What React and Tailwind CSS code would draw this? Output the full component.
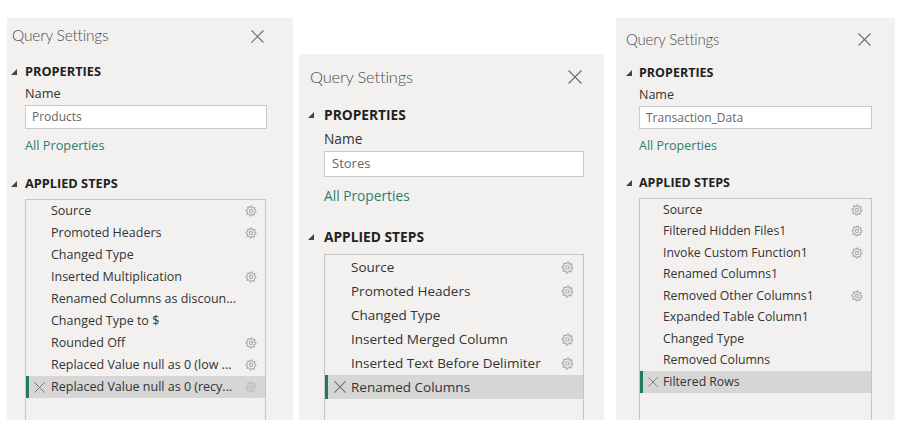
import React from 'react';

const FONT = "font-['Open_Sans','Noto_Sans',sans-serif]";

// small outlined cog used next to steps that have settings
const gearPoints = (() => {
    const pts = [];
    const teeth = 8;
    for (let i = 0; i < teeth * 4; i++) {
        const a = (i / (teeth * 4)) * Math.PI * 2 - Math.PI / 2;
        const r = i % 4 === 0 || i % 4 === 1 ? 5 : 3.7;
        pts.push(`${(6 + r * Math.cos(a)).toFixed(2)},${(6 + r * Math.sin(a)).toFixed(2)}`);
    }
    return pts.join(' ');
})();

const Gear = ({ className }) => (
    <svg viewBox="0 0 12 12" className={className} fill="none" stroke="#aaaaaa" strokeWidth="1.1">
        <polygon points={gearPoints} strokeLinejoin="round" />
        <circle cx="6" cy="6" r="1.6" />
    </svg>
);

const Close = ({ className }) => (
    <svg viewBox="0 0 13 13" className={className} stroke="#6f6f6f" strokeWidth="1.1" fill="none">
        <path d="M0.5 0.5 L12.5 12.5 M12.5 0.5 L0.5 12.5" />
    </svg>
);

const Tri = ({ className }) => (
    <svg viewBox="0 0 6 6" className={className}>
        <polygon points="6,0 6,6 0,6" fill="#444" />
    </svg>
);

const panels = [
    {
        name: 'Products',
        steps: [
            ['Source', true],
            ['Promoted Headers', true],
            ['Changed Type', false],
            ['Inserted Multiplication', true],
            ['Renamed Columns as discoun...', false],
            ['Changed Type to $', false],
            ['Rounded Off', true],
            ['Replaced Value null as 0 (low ...', true],
            ['Replaced Value null as 0 (recy...', true],
        ],
        c: {
            panel: 'w-[286px] h-[402px]',
            header: 'h-[36px] pl-[5px] pr-[29px]',
            title: 'text-[15.5px]',
            close: 'w-[13px] h-[13px]',
            sec: 'h-[20px] pl-[4px]',
            tri: 'w-[6px] h-[6px] mr-[8px]',
            secText: 'text-[12.75px]',
            propMt: 'mt-[8px]',
            appliedMt: 'mt-[18px]',
            inner: 'pl-[18px] pr-[26px]',
            box: 'ml-[18px] mr-[27px] mt-[5px]',
            label: 'h-[20px] mt-[2px] text-[12.75px]',
            input: 'h-[24px] mt-[1px] text-[12px] pl-[6px]',
            link: 'h-[20px] mt-[7px] text-[12.75px]',
            row: 'h-[22px] text-[12.5px] pl-[25px] pr-[8px]',
            rowSel: 'h-[22px] text-[12.5px] pl-[5px] pr-[8px]',
            x: 'w-[11px] h-[11px] mr-[6px]',
            gear: 'w-[12px] h-[12px]',
        },
    },
    {
        name: 'Stores',
        steps: [
            ['Source', true],
            ['Promoted Headers', true],
            ['Changed Type', false],
            ['Inserted Merged Column', true],
            ['Inserted Text Before Delimiter', true],
            ['Renamed Columns', false],
        ],
        c: {
            panel: 'w-[305px] h-[366px] ml-[6px]',
            header: 'h-[46px] pl-[11px] pr-[22px]',
            title: 'text-[16.5px]',
            close: 'w-[14px] h-[14px]',
            sec: 'h-[22px] pl-[9px]',
            tri: 'w-[6px] h-[6px] mr-[10px]',
            secText: 'text-[13.75px]',
            propMt: 'mt-[4px]',
            appliedMt: 'mt-[19px]',
            inner: 'pl-[25px] pr-[20px]',
            box: 'ml-[25px] mr-[20px] mt-[6px]',
            label: 'h-[22px] mt-[2px] text-[13.75px]',
            input: 'h-[26px] mt-[1px] text-[13px] pl-[7px]',
            link: 'h-[22px] mt-[8px] text-[13.75px]',
            row: 'h-[24px] text-[13.5px] pl-[26px] pr-[9px]',
            rowSel: 'h-[24px] text-[13.5px] pl-[6px] pr-[9px]',
            x: 'w-[12px] h-[12px] mr-[5px]',
            gear: 'w-[13px] h-[13px]',
        },
    },
    {
        name: 'Transaction_Data',
        steps: [
            ['Source', true],
            ['Filtered Hidden Files1', true],
            ['Invoke Custom Function1', true],
            ['Renamed Columns1', false],
            ['Removed Other Columns1', true],
            ['Expanded Table Column1', false],
            ['Changed Type', false],
            ['Removed Columns', false],
            ['Filtered Rows', false],
        ],
        c: {
            panel: 'w-[279px] h-[402px] ml-[12px]',
            header: 'h-[42px] pl-[10px] pr-[24px]',
            title: 'text-[15px]',
            close: 'w-[13px] h-[13px]',
            sec: 'h-[20px] pl-[10px]',
            tri: 'w-[6px] h-[6px] mr-[7px]',
            secText: 'text-[12.5px]',
            propMt: 'mt-[3px]',
            appliedMt: 'mt-[17px]',
            inner: 'pl-[23px] pr-[23px]',
            box: 'ml-[23px] mr-[23px] mt-[5px]',
            label: 'h-[20px] mt-[2px] text-[12.5px]',
            input: 'h-[23px] mt-[1px] text-[12px] pl-[6px]',
            link: 'h-[20px] mt-[7px] text-[12.5px]',
            row: 'h-[21.5px] text-[12.25px] pl-[23px] pr-[8px]',
            rowSel: 'h-[21.5px] text-[12.25px] pl-[5px] pr-[8px]',
            x: 'w-[10px] h-[10px] mr-[5px]',
            gear: 'w-[12px] h-[12px]',
        },
    },
];

const Section = ({ c, label, mt }) => (
    <div className={`flex items-center ${c.sec} ${mt}`}>
        <Tri className={`${c.tri} shrink-0`} />
        <span className={`font-bold text-[#222] ${c.secText}`}>{label}</span>
    </div>
);

const Panel = ({ name, steps, c }) => (
    <div className={`flex flex-col bg-[#f2f1f0] overflow-hidden ${c.panel}`}>
        <div className={`flex items-center justify-between shrink-0 ${c.header}`}>
            <span className={`font-['Lato','Open_Sans',sans-serif] font-light tracking-[-0.2px] text-[#4d4d4d] ${c.title}`}>Query Settings</span>
            <Close className={c.close} />
        </div>
        <Section c={c} label="PROPERTIES" mt={c.propMt} />
        <div className={`flex flex-col ${c.inner}`}>
            <div className={`flex items-center text-[#333] ${c.label}`}>Name</div>
            <div className={`flex items-center bg-white border border-[#c9c9c9] text-[#666] ${c.input}`}>{name}</div>
            <div className={`flex items-center text-[#2f7d6d] ${c.link}`}>All Properties</div>
        </div>
        <Section c={c} label="APPLIED STEPS" mt={c.appliedMt} />
        <div className={`flex flex-col flex-1 border-x border-t border-[#c6c6c6] ${c.box}`}>
            {steps.map(([s, gear], i) => {
                const sel = i === steps.length - 1;
                return sel ? (
                    <div key={i} className={`flex items-center bg-[#d6d6d6] border-l-[3px] border-[#217a5e] text-[#333] ${c.rowSel}`}>
                        <Close className={`${c.x} shrink-0`} />
                        <span className="flex-1 whitespace-nowrap">{s}</span>
                        {gear && <Gear className={`${c.gear} shrink-0 opacity-60`} />}
                    </div>
                ) : (
                    <div key={i} className={`flex items-center text-[#333] ${c.row}`}>
                        <span className="flex-1 whitespace-nowrap">{s}</span>
                        {gear && <Gear className={`${c.gear} shrink-0`} />}
                    </div>
                );
            })}
        </div>
    </div>
);

export default function App() {
    return (
        <div className={`w-[913px] h-[431px] bg-white flex items-end pl-[7px] pb-[11px] ${FONT}`}>
            {panels.map((p, i) => (
                <Panel key={i} {...p} />
            ))}
        </div>
    );
}
